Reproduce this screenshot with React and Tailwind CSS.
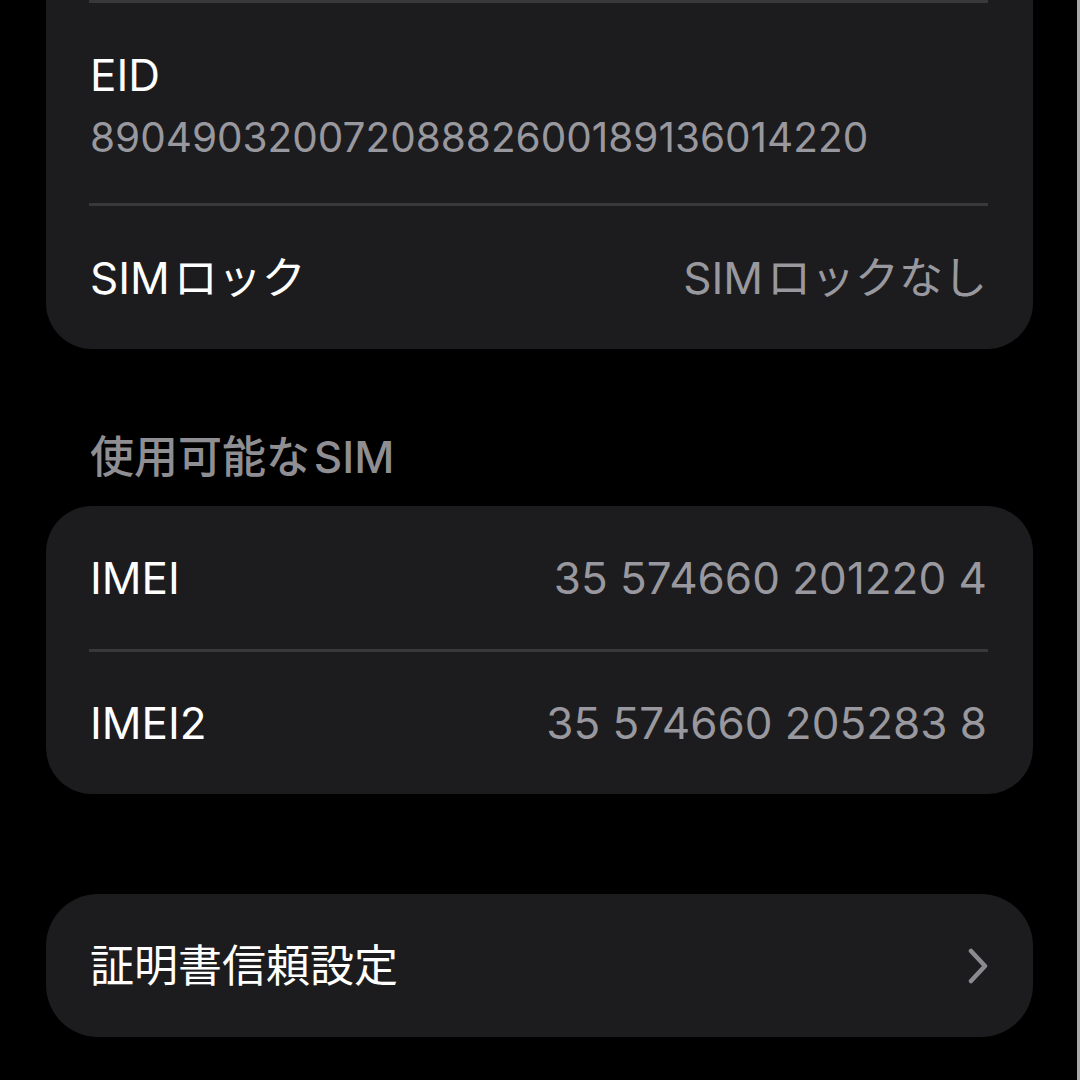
import React from 'react';

const font = { fontFamily: 'Inter, "Noto Sans CJK JP", sans-serif' };

const Separator = () => <div className="ml-[43px] mr-[45px] h-[3px] bg-[#38383a]" />;

const Row = ({ label, value, height = 'h-[143px]' }) => (
    <div className={`${height} flex items-center justify-between pl-[44px] pr-[46px]`}>
        <span className="text-[44px] leading-[44px] text-white">{label}</span>
        {value && <span className="text-[44px] leading-[44px] text-[#98989e]">{value}</span>}
    </div>
);

const Chevron = () => (
    <svg width="22" height="36" viewBox="0 0 22 36" fill="none">
        <path d="M4 3 L18 18 L4 33" stroke="#8a8a8f" strokeWidth="4.5" strokeLinecap="round" strokeLinejoin="round" />
    </svg>
);

const App = () => {
    return (
        <div className="flex h-[1080px] w-full overflow-hidden bg-black" style={font}>
            <div className="flex flex-1 flex-col pl-[46px] pr-[44px]">
                {/* top card, scrolled partly out of view */}
                <div className="rounded-b-[46px] bg-[#1c1c1e]">
                    <Separator />
                    <div className="flex h-[200px] flex-col pl-[44px] pt-[50px]">
                        <span className="text-[44px] leading-[44px] text-white">EID</span>
                        <span className="mt-[20px] text-[40.5px] leading-[42px] text-[#98989e]">
                            89049032007208882600189136014220
                        </span>
                    </div>
                    <Separator />
                    <Row label={'SIM\u200Aロック'} value={'SIM\u200Aロックなし'} />
                </div>

                <div className="h-[157px] pl-[44px] pt-[86px]">
                    <span className="text-[44px] font-medium leading-[44px] text-[#8e8e93]">{'使用可能な\u200ASIM'}</span>
                </div>

                <div className="rounded-[46px] bg-[#1c1c1e]">
                    <Row label="IMEI" value="35 574660 201220 4" />
                    <Separator />
                    <Row label="IMEI2" value="35 574660 205283 8" height="h-[142px]" />
                </div>

                <div className="mt-[100px] flex h-[143px] items-center justify-between rounded-[52px] bg-[#1c1c1e] pl-[44px] pr-[44px]">
                    <span className="text-[44px] leading-[44px] text-white">証明書信頼設定</span>
                    <Chevron />
                </div>
            </div>
            <div className="w-[3px] bg-[#a9a9a9]" />
        </div>
    );
};

export default App;
